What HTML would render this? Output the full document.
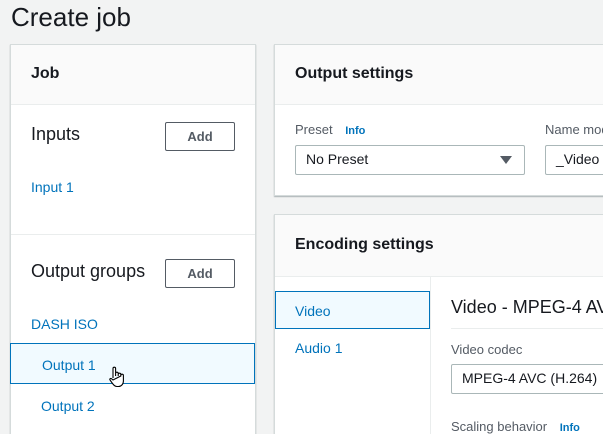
<!DOCTYPE html>
<html style="width:603px;height:434px;overflow:hidden"><head><style>
*{box-sizing:border-box;margin:0;padding:0}
body{width:603px;height:434px;overflow:hidden;background:#f2f3f3;font-family:"Liberation Sans",sans-serif;color:#16191f;position:relative}
.a{position:absolute;white-space:nowrap}
.panel{position:absolute;background:#fff;border:1px solid #d5dbdb;box-shadow:0 1px 1px rgba(0,28,36,.3)}
.hd{position:absolute;left:0;right:0;top:0;background:#fafafa;border-bottom:1px solid #eaeded}
.btn{position:absolute;border:1px solid #545b64;border-radius:2px;background:#fff;font-weight:bold;font-size:13px;color:#545b64;text-align:center;line-height:27px}
.lnk{color:#0073bb;font-size:14px}
.sel{position:absolute;border:1px solid #aab7b8;border-radius:2px;background:#fff;font-size:14px;padding-left:10px;line-height:27px}
.info{color:#0073bb;font-weight:bold;font-size:11px}
</style></head><body>
<div class="a" style="left:11px;top:2px;font-size:26px">Create job</div>

<div class="panel" style="left:10px;top:44px;width:246px;height:400px">
 <div class="hd" style="height:60px"></div>
 <div class="a" style="left:20px;top:20px;font-size:16px;font-weight:bold">Job</div>
 <div class="a" style="left:20px;top:79px;font-size:18px">Inputs</div>
 <div class="btn" style="left:154px;top:77px;width:70px;height:29px">Add</div>
 <div class="a lnk" style="left:20px;top:134px">Input 1</div>
 <div style="position:absolute;left:0;right:0;top:189px;border-top:1px solid #eaeded"></div>
 <div class="a" style="left:20px;top:216px;font-size:18px">Output groups</div>
 <div class="btn" style="left:154px;top:214px;width:70px;height:29px">Add</div>
 <div class="a lnk" style="left:20px;top:271px">DASH ISO</div>
 <div style="position:absolute;left:-1px;top:298px;width:245px;height:41px;background:#f1faff;border:1px solid #0073bb"></div>
 <div class="a lnk" style="left:31px;top:312px">Output 1</div>
 <svg class="a" style="left:97px;top:321px" width="18" height="22" viewBox="0 0 18 22"><path d="M5 12V2.5a1.3 1.3 0 0 1 2.6 0V10M7.6 9V7.5a1.3 1.3 0 0 1 2.6 0V10M10.2 9V8.5a1.3 1.3 0 0 1 2.6 0V10M12.8 10V9.5a1.3 1.3 0 0 1 2.6 0V15c0 3-2 5.5-5 5.5H9c-2 0-3-1-4.5-3L2 14c-.6-1 .5-2 1.5-1.3L5 14z" fill="#fff" stroke="#000" stroke-width="1.1"/></svg>
 <div class="a lnk" style="left:30px;top:353px">Output 2</div>
</div>

<div class="panel" style="left:274px;top:44px;width:340px;height:152px">
 <div class="hd" style="height:60px"></div>
 <div class="a" style="left:20px;top:20px;font-size:16px;font-weight:bold">Output settings</div>
 <div class="a" style="left:20px;top:77px;font-size:13px;color:#545b64">Preset <span class="info" style="margin-left:9px">Info</span></div>
 <div class="sel" style="left:20px;top:100px;width:230px;height:30px">No Preset</div>
 <svg class="a" style="left:225px;top:111px" width="12" height="8"><path d="M0 0h12L6 8z" fill="#545b64"/></svg>
 <div class="a" style="left:270px;top:77px;font-size:13px;color:#545b64">Name modifier</div>
 <div class="sel" style="left:270px;top:100px;width:100px;height:30px">_Video</div>
</div>

<div class="panel" style="left:274px;top:214px;width:340px;height:240px">
 <div class="hd" style="height:62px"></div>
 <div class="a" style="left:20px;top:21px;font-size:16px;font-weight:bold">Encoding settings</div>
 <div style="position:absolute;left:155px;top:62px;bottom:0;border-left:1px solid #eaeded"></div>
 <div style="position:absolute;left:0;top:76px;width:155px;height:38px;background:#f1faff;border:1px solid #0073bb"></div>
 <div class="a lnk" style="left:20px;top:88px">Video</div>
 <div class="a lnk" style="left:20px;top:125px">Audio 1</div>
 <div class="a" style="left:176px;top:82px;font-size:18px">Video - MPEG-4 AVC (H.264)</div>
 <div style="position:absolute;left:176px;right:0;top:113px;border-top:1px solid #eaeded"></div>
 <div class="a" style="left:176px;top:127px;font-size:13px;color:#545b64">Video codec</div>
 <div class="sel" style="left:176px;top:149px;width:200px;height:30px">MPEG-4 AVC (H.264)</div>
 <div class="a" style="left:176px;top:204px;font-size:13px;color:#545b64">Scaling behavior <span class="info" style="margin-left:9px">Info</span></div>
</div>
</body></html>
